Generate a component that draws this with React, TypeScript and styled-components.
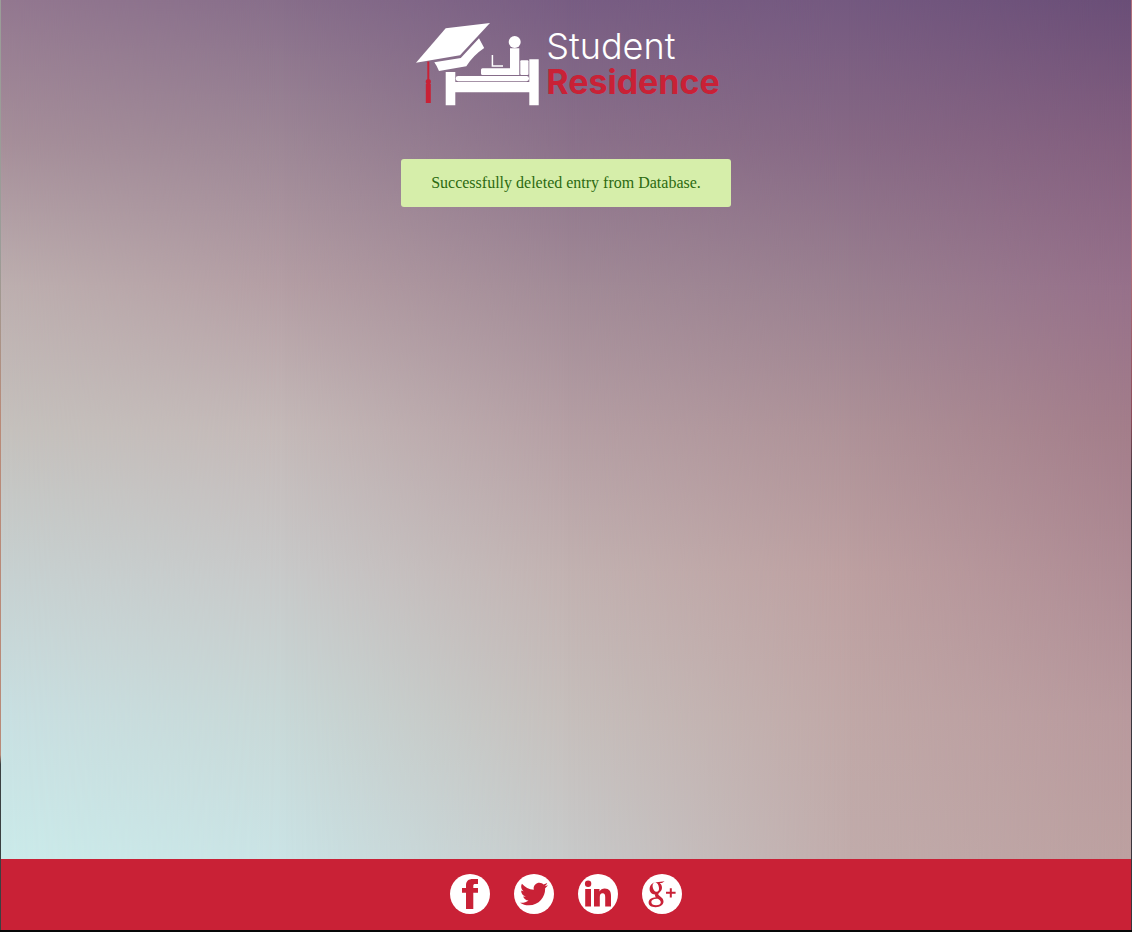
import React from 'react';
import styled, { createGlobalStyle } from 'styled-components';
import { FaTwitter } from 'react-icons/fa';

const GlobalStyle = createGlobalStyle`
  *, *::before, *::after { box-sizing: border-box; }
  body {
    margin: 0;
    font-family: "Liberation Serif", "Times New Roman", serif;
    font-size: 16px;
    line-height: 18px;
  }
`;

const brandRed = '#c92136';

const Frame = styled.div`
  min-height: 100vh;
  display: flex;
  padding: 0 1px 2px;
  background:
    linear-gradient(#080808, #080808) bottom / 100% 2px no-repeat,
    linear-gradient(#9a9d98 0 27%, #b98a78 45% 81%, #3b4041 82%) left / 1px 100% no-repeat,
    linear-gradient(#b0707c 0 28%, #8a4a58 45%, #3a363e 52%) right / 1px 100% no-repeat;
`;

const Page = styled.div`
  position: relative;
  isolation: isolate;
  flex: 1;
  display: flex;
  flex-direction: column;
`;

const Backdrop = styled.div`
  position: absolute;
  inset: 0 0 71px;
  z-index: -1;
  overflow: hidden;
`;

/* Each wash fades in from the previous one, blending into a soft colour mesh. */
const Wash = styled.div<{ $colors: string[]; $from: number; $to: number }>`
  position: absolute;
  inset: 0;
  background: linear-gradient(to bottom, ${p => p.$colors.join(', ')});
  mask-image: ${p =>
    p.$to > 0
      ? `linear-gradient(to right, transparent ${p.$from}%, #000 ${p.$to}%)`
      : 'none'};
`;

const washes = [
  ['#937890', '#a68f9a', '#bdafaf', '#c5c1bd', '#c7d1d1', '#c9e0e2', '#cbebea'],
  ['#876e8a', '#9d8796', '#b49ea4', '#c4b9b8', '#c8c9c9', '#c8d8d7', '#cae3e5'],
  ['#785d83', '#8b718a', '#a28b97', '#b59fa4', '#c2b2b1', '#c6bfbc', '#c8caca'],
  ['#745980', '#876985', '#9a8090', '#ae9298', '#bda0a1', '#c0a8a7', '#c1acab'],
  ['#6a4e77', '#835f7f', '#96708a', '#a37d8a', '#ae8b94', '#b8999d', '#bca0a0'],
];

const Header = styled.header`
  display: flex;
  justify-content: center;
  padding: 22px 0 0 3px;
`;

const Logo = styled.a`
  display: flex;
  gap: 6px;
  text-decoration: none;
`;

const LogoText = styled.span`
  display: flex;
  flex-direction: column;
  padding-top: 7px;
  font-family: Inter, sans-serif;
  line-height: 35px;
`;

const LogoLight = styled.span`
  color: #fff;
  font-size: 36px;
  font-weight: 300;
`;

const LogoBold = styled.span`
  color: ${brandRed};
  font-size: 34px;
  font-weight: 700;
`;

const Main = styled.main`
  flex: 1;
  display: flex;
  flex-direction: column;
  align-items: center;
  padding: 53px 16px;
`;

const Alert = styled.p`
  margin: 0;
  padding: 15px 30px;
  border-radius: 3px;
  background: #d6eeaa;
  color: #2c6a10;
`;

const Footer = styled.footer`
  display: flex;
  justify-content: center;
  gap: 24px;
  padding: 15px 16px 16px;
  background: ${brandRed};
`;

const SocialLink = styled.a`
  display: flex;
  align-items: center;
  justify-content: center;
  width: 40px;
  height: 40px;
  border-radius: 50%;
  background: #fff;
  color: ${brandRed};
`;

const LogoMark = () => (
  <svg width="125" height="84" viewBox="0 0 125 84" fill="#fff" aria-hidden="true">
    <path d="M75 1 30.7 6.3 1 40.7 45 33.3z" />
    <path d="M19.3 40.3 45.8 36 64 16.3 69.2 26Q58 33.5 51.3 44.3L24 49Q22 44 19.3 40.3z" />
    <g fill={brandRed}>
      <path d="M12.3 39.5h2V59h-2z" />
      <circle cx="13.3" cy="59.7" r="2.6" />
      <path d="M10.8 62h5v19h-5z" />
    </g>
    <path d="M30.7 50h9.6v10h74V37.3h9.4v46h-9.4v-13h-74v13h-9.6z" />
    <rect x="40.7" y="54" width="73.3" height="5.2" rx="2.4" />
    <circle cx="99.7" cy="20" r="6" />
    <path d="M95 26.3h9.3V53H67.5q-1.5 0-1.5-1.5v-3.7q0-1.5 1.5-1.5H95z" />
    <rect x="105.3" y="38.3" width="8.2" height="14.7" rx="1" />
    <path d="M77.4 33v11H88" fill="none" stroke="#fff" strokeWidth="1.5" />
  </svg>
);

const FacebookMark = () => (
  <svg width="40" height="40" viewBox="0 0 40 40" fill="currentColor" aria-hidden="true">
    <path d="M16 35V18.8H12V14h4v-2.6C16 7 18.6 5 22.8 5H28v5h-2.6c-1.6 0-2.1.6-2.1 1.9V14H28v4.8h-4.7V35z" />
  </svg>
);

const LinkedinMark = () => (
  <svg width="40" height="40" viewBox="0 0 40 40" fill="currentColor" aria-hidden="true">
    <circle cx="10.1" cy="9.8" r="3.2" />
    <path d="M7.2 15h5.8v17.5H7.2zM16 15h5.5v2.4c1-1.7 2.8-2.8 5.2-2.8 4.6 0 6.3 2.8 6.3 7.4v10.5h-5.8v-9.2c0-2.4-.6-4-2.6-4s-2.8 1.6-2.8 4v9.2H16z" />
  </svg>
);

const GooglePlusMark = () => (
  <svg width="40" height="40" viewBox="0 0 40 40" fill="currentColor" aria-hidden="true">
    <path
      fillRule="evenodd"
      d="M22.6 7.2 20 8.9h-2.3c1.5 1.2 2.3 2.8 2.3 4.9 0 2.2-1.2 3.5-2.5 4.6-.9.8-1.2 1.2-1.2 1.8 0 .8.8 1.3 2 2.2 2.2 1.5 3.2 3 3.2 5.1 0 3.3-3.2 5.7-8 5.7-4.3 0-6.9-1.9-6.9-4.7 0-3.1 3-5.2 7.4-5.3-.8-.8-1.2-1.6-.8-2.8-3.2.2-5.6-2.1-5.6-5.4 0-3.6 2.8-6.8 6.9-6.8zM13.4 8.5c-1.9 0-3 1.5-2.8 3.9.3 3 2 5.3 3.9 5.3 1.8 0 2.7-1.5 2.5-3.7-.3-3.2-1.8-5.5-3.6-5.5zM14.6 24.7c-3.3 0-5.3 1.3-5.3 3.3 0 2 1.8 3.3 4.8 3.3s4.7-1.2 4.7-3c0-1.5-1-2.2-2.6-3.4-.4-.2-1-.2-1.6-.2z"
    />
    <path d="M27.8 14.2h2v3.6h3.8v2h-3.8v3.8h-2v-3.8H24v-2h3.8z" />
  </svg>
);

const socialLinks = [
  { label: 'Facebook', icon: <FacebookMark /> },
  { label: 'Twitter', icon: <FaTwitter size={28} aria-hidden="true" /> },
  { label: 'LinkedIn', icon: <LinkedinMark /> },
  { label: 'Google Plus', icon: <GooglePlusMark /> },
];

export default function App() {
  return (
    <Frame>
      <GlobalStyle />
      <Page>
        <Backdrop aria-hidden="true">
          {washes.map((colors, i) => (
            <Wash key={i} $colors={colors} $from={(i - 1) * 25} $to={i * 25} />
          ))}
        </Backdrop>
        <Header>
          <Logo href="#">
            <LogoMark />
            <LogoText>
              <LogoLight>Student</LogoLight>
              <LogoBold>Residence</LogoBold>
            </LogoText>
          </Logo>
        </Header>
        <Main>
          <Alert role="status">Successfully deleted entry from Database.</Alert>
        </Main>
        <Footer>
          {socialLinks.map(link => (
            <SocialLink key={link.label} href="#" aria-label={link.label}>
              {link.icon}
            </SocialLink>
          ))}
        </Footer>
      </Page>
    </Frame>
  );
}
